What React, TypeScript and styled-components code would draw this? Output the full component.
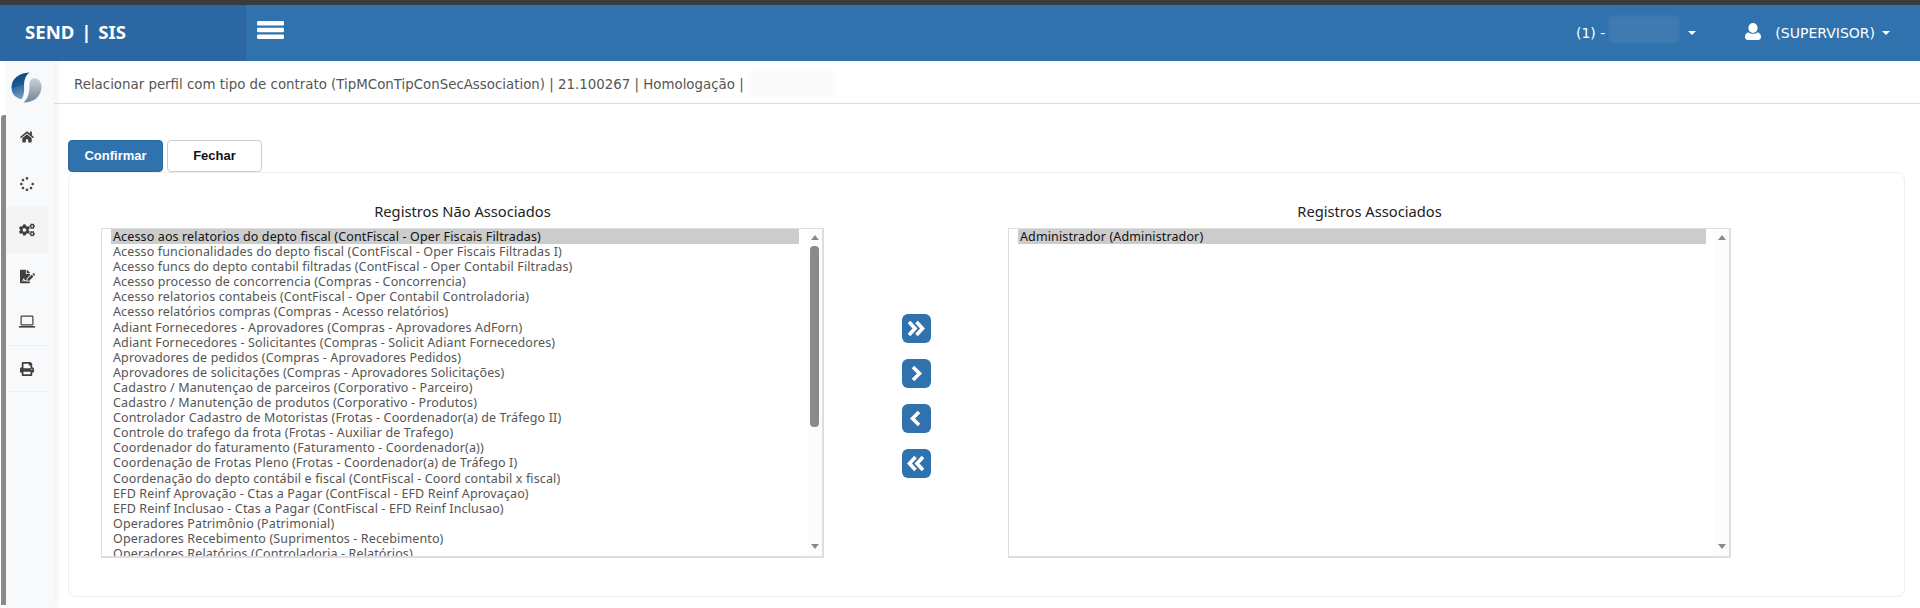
import React from 'react'
import styled, { createGlobalStyle } from 'styled-components'
import { FaHome, FaSpinner, FaCogs, FaFileSignature, FaPrint } from 'react-icons/fa'

const UI_FONT = `"Noto Sans", "DejaVu Sans", sans-serif`
const WIDE_FONT = `"DejaVu Sans", "Noto Sans", sans-serif`

const GlobalStyle = createGlobalStyle`
    html, body {
        margin: 0;
        padding: 0;
        height: 608px;
        overflow: hidden;
        background: #ffffff;
        font-family: ${UI_FONT};
    }
    * { box-sizing: border-box; }
`

const Page = styled.div`
    width: 1920px;
    height: 608px;
    display: flex;
    flex-direction: column;
    overflow: hidden;
`

const TopStrip = styled.div`
    height: 5px;
    background: #3b3b3b;
    flex: none;
`

const Header = styled.header`
    height: 56px;
    flex: none;
    display: flex;
    align-items: center;
    background: #3072ae;
    color: #ffffff;
`

const Brand = styled.div`
    width: 246px;
    height: 100%;
    background: #2a67a3;
    display: flex;
    align-items: center;
    padding: 0 0 4px 25px;
    font-size: 18.6px;
    font-weight: 700;
    word-spacing: 2px;
`

const MenuToggle = styled.div`
    margin: 0 0 6px 11px;
    display: flex;
`

const HeaderRight = styled.div`
    margin-left: auto;
    display: flex;
    align-items: center;
    font-family: ${WIDE_FONT};
    font-size: 14px;
    padding-right: 30px;
`

const Blur = styled.span`
    display: block;
    width: 70px;
    height: 27px;
    margin: -7px 9px 0 4px;
    background: #3f7ab3;
    filter: blur(1px);
`

const Caret = styled.span<{ $gap?: number }>`
    width: 0;
    height: 0;
    margin-left: ${(p) => p.$gap ?? 0}px;
    border-left: 4px solid transparent;
    border-right: 4px solid transparent;
    border-top: 4px solid #ffffff;
`

const UserIcon = styled.span`
    display: flex;
    margin: -4px 14px 0 49px;
`

const Body = styled.div`
    flex: 1;
    display: flex;
    min-height: 0;
`

const Rail = styled.div`
    width: 6px;
    flex: none;
    background: #ffffff;
    padding: 54px 0 0 1px;
`

const RailThumb = styled.div`
    height: 490px;
    background: #8a8a8a;
    border-radius: 3px 0 0 0;
`

const Sidebar = styled.nav`
    width: 48px;
    flex: none;
    background: #f8f9fb;
    box-shadow: 3px 0 6px rgba(0, 0, 0, 0.05);
    display: flex;
    flex-direction: column;
`

const LogoBox = styled.div`
    height: 53px;
    display: flex;
    align-items: center;
    justify-content: center;
    padding-right: 8px;
`

const NavItem = styled.div<{ $active?: boolean; $divider?: boolean; $size?: number }>`
    width: 42px;
    height: 46.4px;
    display: flex;
    align-items: center;
    justify-content: center;
    font-size: ${(p) => p.$size ?? 14}px;
    color: #404040;
    background: ${(p) => (p.$active ? '#f4f4f4' : 'transparent')};
    border-bottom: ${(p) => (p.$divider ? '1px solid #eef0f2' : 'none')};
`

const Main = styled.main`
    flex: 1;
    min-width: 0;
    display: flex;
    flex-direction: column;
`

const TitleBar = styled.div`
    height: 43px;
    flex: none;
    display: flex;
    align-items: center;
    padding: 4px 0 0 20px;
    border-bottom: 1px solid #dcdcdc;
    font-family: ${WIDE_FONT};
    font-size: 13.37px;
    color: #555555;
`

const TitleBlur = styled.span`
    width: 84px;
    height: 26px;
    margin-left: 6px;
    background: #fafafa;
    filter: blur(2px);
`

const Content = styled.div`
    flex: 1;
    min-height: 0;
    padding: 36px 15px 11px 14px;
    display: flex;
    flex-direction: column;
`

const Actions = styled.div`
    display: flex;
    gap: 4px;
    flex: none;
`

const ActionButton = styled.button<{ $primary?: boolean }>`
    width: 95px;
    height: 32px;
    padding: 0 0 2px;
    border-radius: 4px;
    font-family: "Liberation Sans", Arial, sans-serif;
    font-size: 13px;
    font-weight: 700;
    color: ${(p) => (p.$primary ? '#ffffff' : '#111111')};
    background: ${(p) => (p.$primary ? '#3072ae' : '#ffffff')};
    border: 1px solid ${(p) => (p.$primary ? '#2a67a3' : '#cccccc')};
`

const Panel = styled.section`
    flex: 1;
    min-height: 0;
    border: 1px solid #eeeeee;
    border-radius: 8px;
    padding: 28px 0 0 32px;
    display: flex;
    align-items: flex-start;
`

const Column = styled.div`
    width: 723px;
    flex: none;
    display: flex;
    flex-direction: column;
`

const ColumnTitle = styled.div`
    height: 27px;
    text-align: center;
    font-size: 14.7px;
    line-height: 20px;
    color: #222222;
`

const ListBox = styled.div`
    height: 330px;
    display: flex;
    border: 2px solid #dedede;
    border-width: 1px 2px 2px 1px;
    overflow: hidden;
`

const Options = styled.div`
    flex: 1;
    min-width: 0;
    padding: 0 8px 0 9px;
    overflow: hidden;
`

const Option = styled.div<{ $selected?: boolean }>`
    height: 15.1px;
    line-height: 15px;
    font-size: 12.5px;
    letter-spacing: 0.13px;
    padding-left: 2px;
    white-space: nowrap;
    color: ${(p) => (p.$selected ? '#111111' : '#555555')};
    background: ${(p) => (p.$selected ? '#cccccc' : 'transparent')};
`

const FakeScroll = styled.div`
    width: 15px;
    flex: none;
    background: #fcfcfc;
    display: flex;
    flex-direction: column;
    align-items: center;
    padding-top: 6px;
`

const ArrowUp = styled.div`
    width: 0;
    height: 0;
    border-left: 4.5px solid transparent;
    border-right: 4.5px solid transparent;
    border-bottom: 5px solid #8a8a8a;
`

const ArrowDown = styled.div`
    width: 0;
    height: 0;
    margin-top: auto;
    margin-bottom: 7px;
    border-left: 4.5px solid transparent;
    border-right: 4.5px solid transparent;
    border-top: 5px solid #8a8a8a;
`

const Thumb = styled.div`
    width: 9px;
    height: 181px;
    margin-top: 6px;
    border-radius: 4px;
    background: #8a8a8a;
`

const Transfer = styled.div`
    width: 184px;
    flex: none;
    display: flex;
    flex-direction: column;
    align-items: center;
    gap: 16px;
    padding-top: 113px;
`

const TransferButton = styled.div`
    width: 29px;
    height: 29px;
    display: flex;
    align-items: center;
    justify-content: center;
    border-radius: 6px;
    background: #3072ae;
`

const unassociated = [
    'Acesso aos relatorios do depto fiscal (ContFiscal - Oper Fiscais Filtradas)',
    'Acesso funcionalidades do depto fiscal (ContFiscal - Oper Fiscais Filtradas I)',
    'Acesso funcs do depto contabil filtradas (ContFiscal - Oper Contabil Filtradas)',
    'Acesso processo de concorrencia (Compras - Concorrencia)',
    'Acesso relatorios contabeis (ContFiscal - Oper Contabil Controladoria)',
    'Acesso relatórios compras (Compras - Acesso relatórios)',
    'Adiant Fornecedores - Aprovadores (Compras - Aprovadores AdForn)',
    'Adiant Fornecedores - Solicitantes (Compras - Solicit Adiant Fornecedores)',
    'Aprovadores de pedidos (Compras - Aprovadores Pedidos)',
    'Aprovadores de solicitações (Compras - Aprovadores Solicitações)',
    'Cadastro / Manutençao de parceiros (Corporativo - Parceiro)',
    'Cadastro / Manutenção de produtos (Corporativo - Produtos)',
    'Controlador Cadastro de Motoristas (Frotas - Coordenador(a) de Tráfego II)',
    'Controle do trafego da frota (Frotas - Auxiliar de Trafego)',
    'Coordenador do faturamento (Faturamento - Coordenador(a))',
    'Coordenação de Frotas Pleno (Frotas - Coordenador(a) de Tráfego I)',
    'Coordenação do depto contábil e fiscal (ContFiscal - Coord contabil x fiscal)',
    'EFD Reinf Aprovação - Ctas a Pagar (ContFiscal - EFD Reinf Aprovaçao)',
    'EFD Reinf Inclusao - Ctas a Pagar (ContFiscal - EFD Reinf Inclusao)',
    'Operadores Patrimônio (Patrimonial)',
    'Operadores Recebimento (Suprimentos - Recebimento)',
    'Operadores Relatórios (Controladoria - Relatórios)',
]

function Logo() {
    return (
        <svg width="31" height="31" viewBox="0 0 32 32">
            <defs>
                <linearGradient id="logoDark" x1="0.3" y1="0" x2="0.5" y2="1">
                    <stop offset="0" stopColor="#0d4679" />
                    <stop offset="0.5" stopColor="#1a5c93" />
                    <stop offset="0.52" stopColor="#2c6fa5" />
                    <stop offset="1" stopColor="#7d9fba" />
                </linearGradient>
                <linearGradient id="logoGrey" x1="0" y1="0" x2="0" y2="1">
                    <stop offset="0" stopColor="#c9d1d8" />
                    <stop offset="1" stopColor="#6f8596" />
                </linearGradient>
            </defs>
            <path d="M19 0.5 C8 1 0.5 7 0.5 16 C0.5 23 5 27 11 28 C14 24 13.5 18 13.5 14 C13.5 8 15 3.5 19 0.5 Z" fill="url(#logoDark)" />
            <path d="M13 31.5 C24 31.5 31.5 25 31.5 15 C31.5 10 28 6.5 24 6.5 C20.5 6.5 19 9.5 19 14 C19 21 18 27 13 31.5 Z" fill="url(#logoGrey)" />
        </svg>
    )
}

function MenuIcon() {
    return (
        <svg width="27" height="18" viewBox="0 0 27 18" fill="#ffffff">
            <rect x="0" y="0" width="27" height="4.4" rx="1.2" />
            <rect x="0" y="6.8" width="27" height="4.4" rx="1.2" />
            <rect x="0" y="13.6" width="27" height="4.4" rx="1.2" />
        </svg>
    )
}

function UserGlyph() {
    return (
        <svg width="16" height="17" viewBox="0 0 16 17" fill="#ffffff">
            <ellipse cx="8" cy="5" rx="4.6" ry="5" />
            <path d="M3.4 9.2 C5.5 11.4 10.5 11.4 12.6 9.2 C14.8 9.8 16 11.4 16 14 C16 16 14.8 17 13 17 L3 17 C1.2 17 0 16 0 14 C0 11.4 1.2 9.8 3.4 9.2 Z" />
        </svg>
    )
}

function LaptopGlyph() {
    return (
        <svg width="16" height="14" viewBox="0 0 16 14" fill="none" stroke="#404040" strokeWidth="1.2">
            <rect x="2.1" y="1.1" width="11.8" height="8.8" rx="0.8" />
            <path d="M0 11.8 H16" strokeWidth="1.6" />
        </svg>
    )
}

// the move buttons, left ones are the same drawing mirrored
function Chevrons({ double, left }: { double?: boolean; left?: boolean }) {
    return (
        <svg
            width="18"
            height="17"
            viewBox="0 0 18 17"
            fill="none"
            stroke="#ffffff"
            strokeWidth="3.6"
            transform={left ? 'scale(-1 1)' : undefined}
        >
            {double ? (
                <>
                    <path d="M2 2 L8 8.5 L2 15" />
                    <path d="M9.5 2 L15.5 8.5 L9.5 15" />
                </>
            ) : (
                <path d="M6 2 L12.5 8.5 L6 15" />
            )}
        </svg>
    )
}

function ListPanel({ title, items, withThumb }: { title: string; items: string[]; withThumb?: boolean }) {
    return (
        <Column>
            <ColumnTitle>{title}</ColumnTitle>
            <ListBox>
                <Options>
                    {items.map((item, i) => (
                        <Option key={item} $selected={i === 0}>{item}</Option>
                    ))}
                </Options>
                <FakeScroll>
                    <ArrowUp />
                    {withThumb && <Thumb />}
                    <ArrowDown />
                </FakeScroll>
            </ListBox>
        </Column>
    )
}

export default function App() {
    return (
        <Page>
            <GlobalStyle />
            <TopStrip />
            <Header>
                <Brand>SEND | SIS</Brand>
                <MenuToggle><MenuIcon /></MenuToggle>
                <HeaderRight>
                    (1) -
                    <Blur />
                    <Caret />
                    <UserIcon><UserGlyph /></UserIcon>
                    (SUPERVISOR)
                    <Caret $gap={7} />
                </HeaderRight>
            </Header>
            <Body>
                <Rail><RailThumb /></Rail>
                <Sidebar>
                    <LogoBox><Logo /></LogoBox>
                    <NavItem><FaHome /></NavItem>
                    <NavItem><FaSpinner /></NavItem>
                    <NavItem $active $size={16}><FaCogs /></NavItem>
                    <NavItem $size={15}><FaFileSignature /></NavItem>
                    <NavItem $divider><LaptopGlyph /></NavItem>
                    <NavItem $divider><FaPrint /></NavItem>
                </Sidebar>
                <Main>
                    <TitleBar>
                        Relacionar perfil com tipo de contrato (TipMConTipConSecAssociation) | 21.100267 | Homologação |
                        <TitleBlur />
                    </TitleBar>
                    <Content>
                        <Actions>
                            <ActionButton $primary>Confirmar</ActionButton>
                            <ActionButton>Fechar</ActionButton>
                        </Actions>
                        <Panel>
                            <ListPanel title="Registros Não Associados" items={unassociated} withThumb />
                            <Transfer>
                                <TransferButton><Chevrons double /></TransferButton>
                                <TransferButton><Chevrons /></TransferButton>
                                <TransferButton><Chevrons left /></TransferButton>
                                <TransferButton><Chevrons double left /></TransferButton>
                            </Transfer>
                            <ListPanel title="Registros Associados" items={['Administrador (Administrador)']} />
                        </Panel>
                    </Content>
                </Main>
            </Body>
        </Page>
    )
}
